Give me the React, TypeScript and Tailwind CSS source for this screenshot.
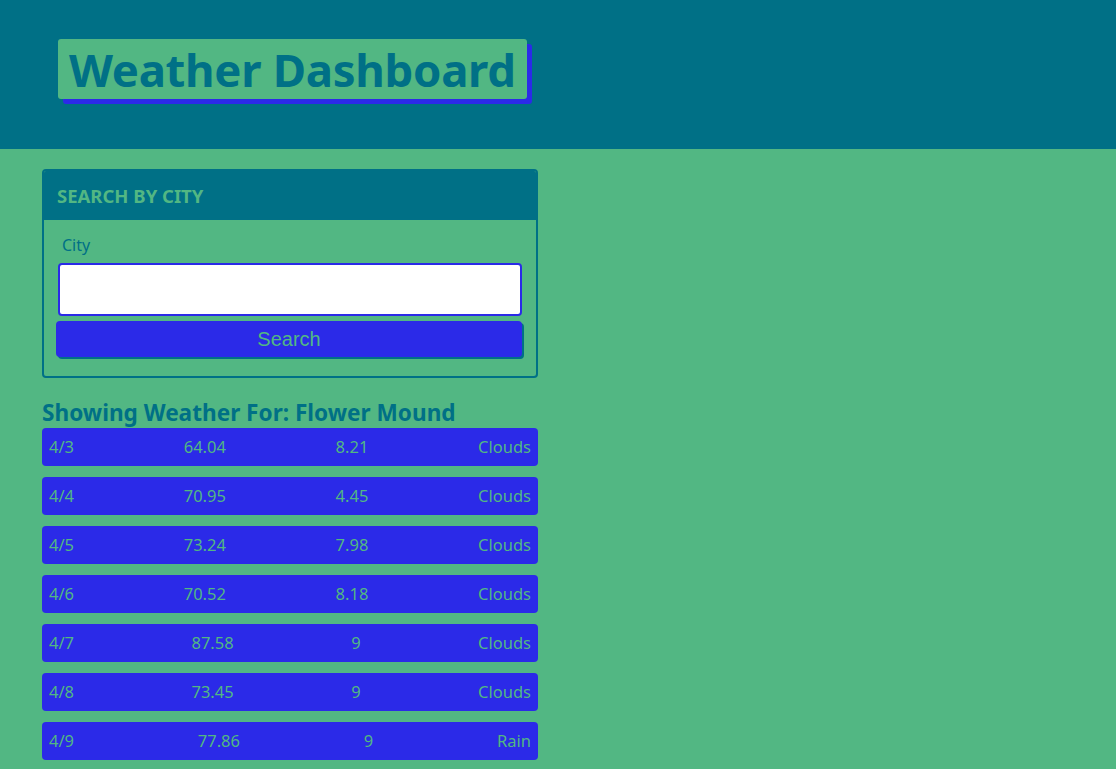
import React from 'react';

const forecast = [
  { date: '4/3', temp: '64.04', wind: '8.21', sky: 'Clouds' },
  { date: '4/4', temp: '70.95', wind: '4.45', sky: 'Clouds' },
  { date: '4/5', temp: '73.24', wind: '7.98', sky: 'Clouds' },
  { date: '4/6', temp: '70.52', wind: '8.18', sky: 'Clouds' },
  { date: '4/7', temp: '87.58', wind: '9', sky: 'Clouds' },
  { date: '4/8', temp: '73.45', wind: '9', sky: 'Clouds' },
  { date: '4/9', temp: '77.86', wind: '9', sky: 'Rain' },
];

const App: React.FC = () => {
  return (
    <div className="min-h-screen bg-[#52b783] font-['Noto_Sans',sans-serif] text-[#007086]">
      {/* Header */}
      <header className="h-[149px] bg-[#007086] pl-[58px] pt-[39px]">
        <h1 className="inline-block bg-[#52b783] rounded-[3px] px-[11px] h-[60px] leading-[60px] text-[45.5px] font-bold tracking-[-0.3px] shadow-[5px_5px_0_#2b2ae8]">
          Weather Dashboard
        </h1>
      </header>

      <main className="pl-[42px] pt-[20px] w-[538px]">
        {/* Search card */}
        <section className="border-2 border-[#007086] rounded-[4px] overflow-hidden">
          <div className="bg-[#007086] h-[49px] flex items-center px-[13px]">
            <h2 className="text-[18.5px] font-bold uppercase text-[#52b783]">Search by City</h2>
          </div>
          <div className="px-[14px] pt-[13px] pb-[19px]">
            <label className="block pl-[4px] text-[16px] leading-[24px] mb-[6px]">City</label>
            <input className="block w-full h-[53px] bg-white border-2 border-[#2b2ae8] rounded-[4px] outline-none" />
            <button className="mt-[5px] block w-[466px] -ml-[2px] h-[36px] bg-[#2b2ae8] rounded-[4px] text-[20px] text-[#52b783] font-['Liberation_Sans',sans-serif] shadow-[2px_2px_0_#007086]">
              Search
            </button>
          </div>
        </section>

        {/* Results */}
        <h3 className="mt-[20px] text-[22.6px] leading-[30px] font-bold">Showing Weather For: Flower Mound</h3>
        <div className="flex flex-col gap-[11px]">
          {forecast.map((d) => (
            <div key={d.date} className="h-[38px] bg-[#2b2ae8] rounded-[4px] px-[7px] flex items-center justify-between text-[16.5px] text-[#52b783]">
              <span>{d.date}</span>
              <span>{d.temp}</span>
              <span>{d.wind}</span>
              <span>{d.sky}</span>
            </div>
          ))}
        </div>
      </main>
    </div>
  );
};

export default App;
